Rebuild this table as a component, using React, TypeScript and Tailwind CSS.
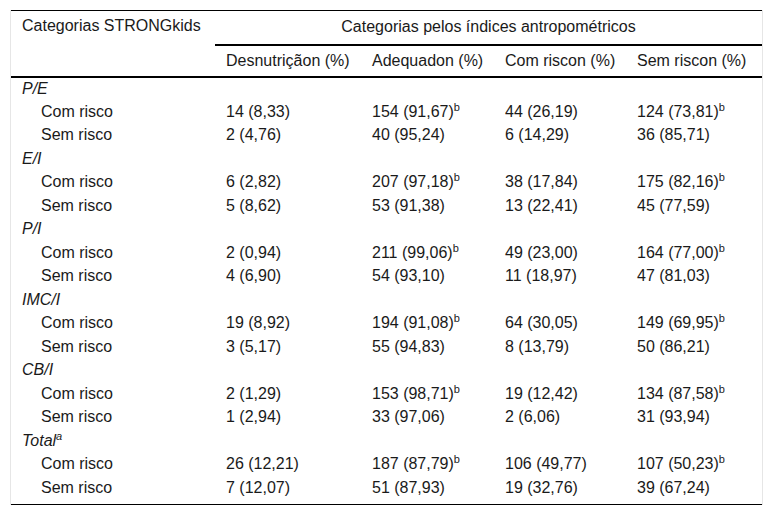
const groups = [
  {
    label: "P/E",
    rows: [
      ["Com risco", "14 (8,33)", "154 (91,67)", "44 (26,19)", "124 (73,81)", true],
      ["Sem risco", "2 (4,76)", "40 (95,24)", "6 (14,29)", "36 (85,71)", false],
    ],
  },
  {
    label: "E/I",
    rows: [
      ["Com risco", "6 (2,82)", "207 (97,18)", "38 (17,84)", "175 (82,16)", true],
      ["Sem risco", "5 (8,62)", "53 (91,38)", "13 (22,41)", "45 (77,59)", false],
    ],
  },
  {
    label: "P/I",
    rows: [
      ["Com risco", "2 (0,94)", "211 (99,06)", "49 (23,00)", "164 (77,00)", true],
      ["Sem risco", "4 (6,90)", "54 (93,10)", "11 (18,97)", "47 (81,03)", false],
    ],
  },
  {
    label: "IMC/I",
    rows: [
      ["Com risco", "19 (8,92)", "194 (91,08)", "64 (30,05)", "149 (69,95)", true],
      ["Sem risco", "3 (5,17)", "55 (94,83)", "8 (13,79)", "50 (86,21)", false],
    ],
  },
  {
    label: "CB/I",
    rows: [
      ["Com risco", "2 (1,29)", "153 (98,71)", "19 (12,42)", "134 (87,58)", true],
      ["Sem risco", "1 (2,94)", "33 (97,06)", "2 (6,06)", "31 (93,94)", false],
    ],
  },
  {
    label: "Total",
    sup: "a",
    rows: [
      ["Com risco", "26 (12,21)", "187 (87,79)", "106 (49,77)", "107 (50,23)", true],
      ["Sem risco", "7 (12,07)", "51 (87,93)", "19 (32,76)", "39 (67,24)", false],
    ],
  },
] as { label: string; sup?: string; rows: [string, string, string, string, string, boolean][] }[];

function Sup({ children }: { children: string }) {
  return <sup className="relative -top-[6px] text-[11px] leading-none">{children}</sup>;
}

export default function App() {
  return (
    <div className="bg-white pl-[10px] pt-[10px] font-['Liberation_Sans',Arial,sans-serif] text-[16px] leading-[18px] text-[#1a1a1a]">
      <div className="w-[753px] border-x border-[#e6e6e6]">
        <table className="w-full table-fixed border-collapse">
          <colgroup>
            <col className="w-[204px]" />
            <col className="w-[146px]" />
            <col className="w-[133px]" />
            <col className="w-[132px]" />
            <col />
          </colgroup>
          <thead>
            <tr className="h-[34px] border-t border-black">
              <th className="pb-[3px] pl-[11px] text-left align-middle font-normal">Categorias STRONGkids</th>
              <th colSpan={4} className="pb-[1px] text-center font-normal">
                Categorias pelos índices antropométricos
              </th>
            </tr>
            <tr className="h-[32px] border-b-2 border-black">
              <th className="font-normal"></th>
              <th className="border-t-2 border-black pl-[11px] text-left font-normal">Desnutriçãon (%)</th>
              <th className="border-t-2 border-black pl-[11px] text-left font-normal">Adequadon (%)</th>
              <th className="border-t-2 border-black pl-[11px] text-left font-normal">Com riscon (%)</th>
              <th className="border-t-2 border-black pl-[11px] text-left font-normal">Sem riscon (%)</th>
            </tr>
          </thead>
          <tbody>
            {groups.map((g) => (
              <>
                <tr key={g.label} className="h-[23.5px]">
                  <td className="pl-[11px] italic" colSpan={5}>
                    {g.label}
                    {g.sup && <Sup>{g.sup}</Sup>}
                  </td>
                </tr>
                {g.rows.map((r) => (
                  <tr key={g.label + r[0]} className="h-[23.5px]">
                    <td className="pl-[30px]">{r[0]}</td>
                    <td className="pl-[11px]">{r[1]}</td>
                    <td className="pl-[11px]">
                      {r[2]}
                      {r[5] && <Sup>b</Sup>}
                    </td>
                    <td className="pl-[11px]">{r[3]}</td>
                    <td className="pl-[11px]">
                      {r[4]}
                      {r[5] && <Sup>b</Sup>}
                    </td>
                  </tr>
                ))}
              </>
            ))}
            <tr className="h-[5px] border-b border-black">
              <td colSpan={5}></td>
            </tr>
          </tbody>
        </table>
      </div>
    </div>
  );
}
